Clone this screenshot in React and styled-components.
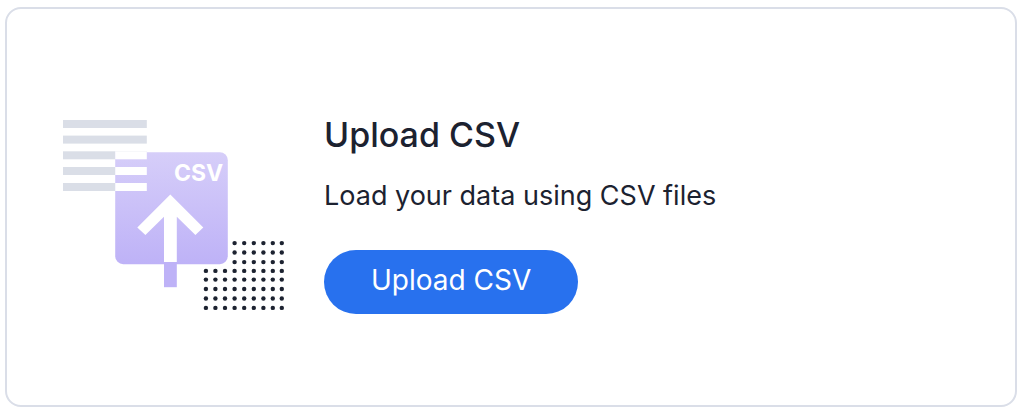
import React from "react";
import styled, { createGlobalStyle } from "styled-components";

const GlobalStyle = createGlobalStyle`
  * { box-sizing: border-box; }
  body { margin: 0; background: #ffffff; }
`;

const Page = styled.main`
  padding: 7px 5px 10px;
  font-family: Inter, "Liberation Sans", sans-serif;
  color: #1c2230;
`;

const Card = styled.section`
  display: flex;
  align-items: flex-start;
  gap: 39px;
  padding: 104px 56px 91px;
  border: 2px solid #dadee8;
  border-radius: 16px;
  background: #ffffff;
`;

const Artwork = styled.svg`
  flex: none;
  display: block;
  width: 222px;
  height: 191px;
  margin-top: 7px;
`;

const Content = styled.div`
  display: flex;
  flex-direction: column;
  align-items: flex-start;
  min-width: 0;
`;

const Title = styled.h2`
  margin: 0;
  font-size: 34px;
  line-height: 44px;
  font-weight: 500;
`;

const Description = styled.p`
  margin: 20px 0 35px;
  font-size: 27px;
  line-height: 38px;
`;

const UploadButton = styled.button`
  height: 64px;
  padding: 0 47px 4px;
  border: 0;
  border-radius: 32px;
  background: #2871ee;
  color: #ffffff;
  font: inherit;
  font-size: 28px;
  line-height: 36px;
  white-space: nowrap;
  cursor: pointer;
`;

const LINES = [120, 135.6, 151.3, 167, 183];
const DOT_COLUMNS = [205.9, 215.4, 225, 234.6, 244.2, 253.8, 263.4, 272.8, 281.8];
const DOT_ROWS = [243.1, 252.5, 262.1, 270.9, 279.6, 289, 298.5, 307.9];

function CsvArtwork() {
  return (
    <Artwork viewBox="63 120 222 191" aria-hidden="true">
      <defs>
        <linearGradient id="sheet" x1="0" y1="0" x2="0" y2="1">
          <stop offset="0" stopColor="#d6cef9" />
          <stop offset="1" stopColor="#beb2f7" />
        </linearGradient>
      </defs>
      {LINES.map((y) => (
        <rect key={y} x="63" y={y} width="83.8" height="8" fill="#dadee7" />
      ))}
      <path
        d="M115.2 152.2H219.8a8 8 0 0 1 8 8V256.2a8 8 0 0 1-8 8H123.2a8 8 0 0 1-8-8Z"
        fill="url(#sheet)"
      />
      {LINES.slice(2).map((y) => (
        <rect key={y} x="115.2" y={y} width="31.6" height="8" fill="#ffffff" />
      ))}
      <path
        d="M170.3 194.6L203.3 227.4L195.4 235.1L176.8 216.8V262H164V216.8L145.4 235.1L137.3 227.4Z"
        fill="#ffffff"
      />
      <rect x="164" y="262" width="12.8" height="25.2" fill="#beb2f7" />
      <text
        x="174"
        y="181"
        fill="#ffffff"
        fontFamily='Inter, "Liberation Sans", sans-serif'
        fontSize="23"
        fontWeight="700"
      >
        CSV
      </text>
      {DOT_ROWS.map((y, row) =>
        DOT_COLUMNS.slice(row < 3 ? 3 : 0).map((x) => (
          <circle key={`${x}-${y}`} cx={x} cy={y} r="2.2" fill="#1c2230" />
        ))
      )}
    </Artwork>
  );
}

export default function App() {
  return (
    <>
      <GlobalStyle />
      <Page>
        <Card>
          <CsvArtwork />
          <Content>
            <Title>Upload CSV</Title>
            <Description>Load your data using CSV files</Description>
            <UploadButton type="button">Upload CSV</UploadButton>
          </Content>
        </Card>
      </Page>
    </>
  );
}
